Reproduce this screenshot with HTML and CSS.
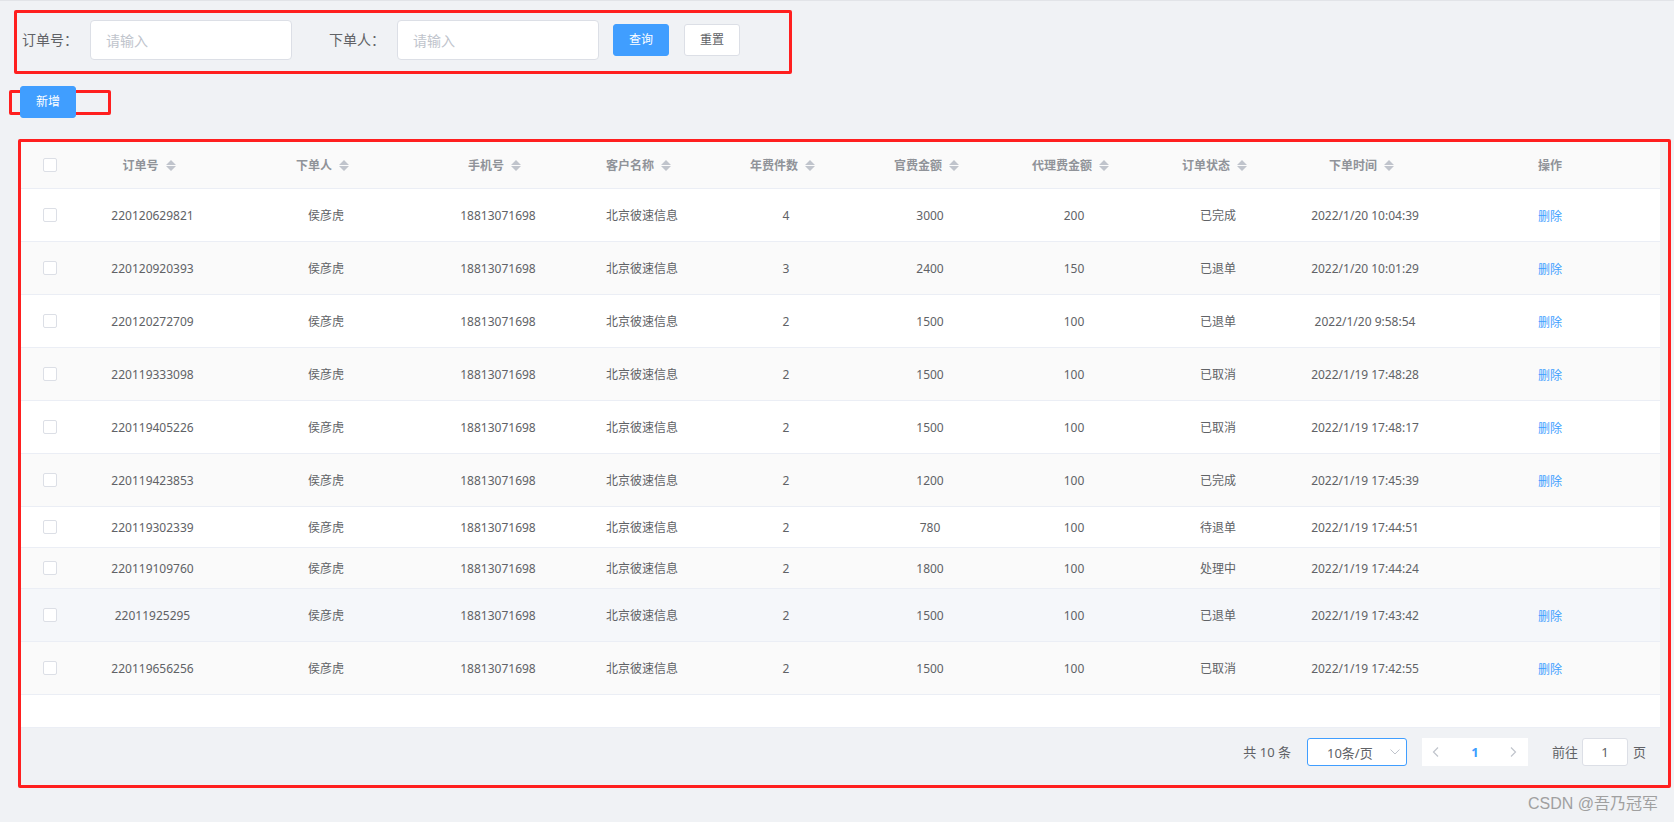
FILE: index.html
```html
<!DOCTYPE html>
<html lang="zh-CN">
<head>
<meta charset="utf-8">
<title>订单列表</title>
<link rel="stylesheet" href="styles.css">
</head>
<body>
<div class="page">
  <form class="search-form annot">
    <div class="form-item">
      <label class="form-label">订单号：</label>
      <input class="input" type="text" placeholder="请输入">
    </div>
    <div class="form-item">
      <label class="form-label">下单人：</label>
      <input class="input" type="text" placeholder="请输入">
    </div>
    <button type="button" class="btn btn-primary btn-query">查询</button>
    <button type="button" class="btn btn-reset">重置</button>
  </form>

  <div class="toolbar">
    <span class="annot mark-add"></span>
    <button type="button" class="btn btn-primary btn-add">新增</button>
  </div>

  <div class="table-box annot">
    <table class="grid">
      <colgroup>
        <col class="c-sel"><col class="c-no"><col class="c-user"><col class="c-mid"><col class="c-mid"><col class="c-mid"><col class="c-mid"><col class="c-mid"><col class="c-mid"><col class="c-time"><col class="c-op">
      </colgroup>
      <thead>
        <tr>
          <th><span class="checkbox"></span></th>
          <th>订单号<svg class="caret" viewBox="0 0 10 11" width="10" height="11"><path d="M0 5L5 0L10 5Z M0 6L10 6L5 11Z"/></svg></th>
          <th>下单人<svg class="caret" viewBox="0 0 10 11" width="10" height="11"><path d="M0 5L5 0L10 5Z M0 6L10 6L5 11Z"/></svg></th>
          <th>手机号<svg class="caret" viewBox="0 0 10 11" width="10" height="11"><path d="M0 5L5 0L10 5Z M0 6L10 6L5 11Z"/></svg></th>
          <th>客户名称<svg class="caret" viewBox="0 0 10 11" width="10" height="11"><path d="M0 5L5 0L10 5Z M0 6L10 6L5 11Z"/></svg></th>
          <th>年费件数<svg class="caret" viewBox="0 0 10 11" width="10" height="11"><path d="M0 5L5 0L10 5Z M0 6L10 6L5 11Z"/></svg></th>
          <th>官费金额<svg class="caret" viewBox="0 0 10 11" width="10" height="11"><path d="M0 5L5 0L10 5Z M0 6L10 6L5 11Z"/></svg></th>
          <th>代理费金额<svg class="caret" viewBox="0 0 10 11" width="10" height="11"><path d="M0 5L5 0L10 5Z M0 6L10 6L5 11Z"/></svg></th>
          <th>订单状态<svg class="caret" viewBox="0 0 10 11" width="10" height="11"><path d="M0 5L5 0L10 5Z M0 6L10 6L5 11Z"/></svg></th>
          <th>下单时间<svg class="caret" viewBox="0 0 10 11" width="10" height="11"><path d="M0 5L5 0L10 5Z M0 6L10 6L5 11Z"/></svg></th>
          <th>操作</th>
        </tr>
      </thead>
      <tbody>
        <tr class="tall"><td><span class="checkbox"></span></td><td>220120629821</td><td>侯彦虎</td><td>18813071698</td><td>北京彼速信息</td><td>4</td><td>3000</td><td>200</td><td>已完成</td><td>2022/1/20 10:04:39</td><td><a class="link">删除</a></td></tr>
        <tr class="tall"><td><span class="checkbox"></span></td><td>220120920393</td><td>侯彦虎</td><td>18813071698</td><td>北京彼速信息</td><td>3</td><td>2400</td><td>150</td><td>已退单</td><td>2022/1/20 10:01:29</td><td><a class="link">删除</a></td></tr>
        <tr class="tall"><td><span class="checkbox"></span></td><td>220120272709</td><td>侯彦虎</td><td>18813071698</td><td>北京彼速信息</td><td>2</td><td>1500</td><td>100</td><td>已退单</td><td>2022/1/20 9:58:54</td><td><a class="link">删除</a></td></tr>
        <tr class="tall"><td><span class="checkbox"></span></td><td>220119333098</td><td>侯彦虎</td><td>18813071698</td><td>北京彼速信息</td><td>2</td><td>1500</td><td>100</td><td>已取消</td><td>2022/1/19 17:48:28</td><td><a class="link">删除</a></td></tr>
        <tr class="tall"><td><span class="checkbox"></span></td><td>220119405226</td><td>侯彦虎</td><td>18813071698</td><td>北京彼速信息</td><td>2</td><td>1500</td><td>100</td><td>已取消</td><td>2022/1/19 17:48:17</td><td><a class="link">删除</a></td></tr>
        <tr class="tall"><td><span class="checkbox"></span></td><td>220119423853</td><td>侯彦虎</td><td>18813071698</td><td>北京彼速信息</td><td>2</td><td>1200</td><td>100</td><td>已完成</td><td>2022/1/19 17:45:39</td><td><a class="link">删除</a></td></tr>
        <tr class="short"><td><span class="checkbox"></span></td><td>220119302339</td><td>侯彦虎</td><td>18813071698</td><td>北京彼速信息</td><td>2</td><td>780</td><td>100</td><td>待退单</td><td>2022/1/19 17:44:51</td><td></td></tr>
        <tr class="short"><td><span class="checkbox"></span></td><td>220119109760</td><td>侯彦虎</td><td>18813071698</td><td>北京彼速信息</td><td>2</td><td>1800</td><td>100</td><td>处理中</td><td>2022/1/19 17:44:24</td><td></td></tr>
        <tr class="tall hover"><td><span class="checkbox"></span></td><td>22011925295</td><td>侯彦虎</td><td>18813071698</td><td>北京彼速信息</td><td>2</td><td>1500</td><td>100</td><td>已退单</td><td>2022/1/19 17:43:42</td><td><a class="link">删除</a></td></tr>
        <tr class="tall"><td><span class="checkbox"></span></td><td>220119656256</td><td>侯彦虎</td><td>18813071698</td><td>北京彼速信息</td><td>2</td><td>1500</td><td>100</td><td>已取消</td><td>2022/1/19 17:42:55</td><td><a class="link">删除</a></td></tr>
      </tbody>
    </table>
    <div class="table-empty"></div>
    <div class="pager-bar">
      <span class="total">共 10 条</span>
      <div class="sizes">
        <span>10条/页</span>
        <svg class="sizes-arrow" viewBox="0 0 10 6" width="10" height="6"><path d="M0.5 0.5L5 5L9.5 0.5"/></svg>
      </div>
      <div class="pager">
        <span class="prev"><svg viewBox="0 0 7 10" width="7" height="10"><path d="M6 0.5L1.5 5L6 9.5"/></svg></span>
        <span class="num">1</span>
        <span class="next"><svg viewBox="0 0 7 10" width="7" height="10"><path d="M1 0.5L5.5 5L1 9.5"/></svg></span>
      </div>
      <span class="jump">前往</span>
      <input class="jump-input" type="text" value="1">
      <span class="jump-unit">页</span>
    </div>
  </div>

  <div class="watermark">CSDN @吾乃冠军</div>
</div>
</body>
</html>
```

FILE: styles.css
```css
* {
  box-sizing: border-box;
}

html,
body {
  margin: 0;
  padding: 0;
}

body {
  width: 1674px;
  height: 822px;
  overflow: hidden;
  background: #f0f2f5;
  font-family: "Noto Sans", "Noto Sans CJK SC", sans-serif;
  color: #606266;
}

.page {
  border-top: 1px solid #e2e4e8;
  padding-top: 9px;
}

.annot {
  border: 3px solid #ff1f1f;
  border-radius: 2px;
}

/* search form */
.search-form {
  margin: 0 0 0 14px;
  width: 778px;
  height: 64px;
  display: flex;
  align-items: center;
  padding: 0 0 4px 5px;
}

.form-item {
  display: flex;
  align-items: center;
}

.form-item + .form-item {
  margin-left: 37px;
}

.form-label {
  width: 68px;
  padding-right: 12px;
  font-size: 14px;
  line-height: 40px;
  color: #606266;
  white-space: nowrap;
}

.input {
  width: 202px;
  height: 40px;
  border: 1px solid #dcdfe6;
  border-radius: 4px;
  padding: 0 15px;
  font-size: 14px;
  font-family: inherit;
  color: #606266;
  background: #fff;
  outline: none;
}

.input::placeholder {
  color: #c0c4cc;
}

.btn {
  width: 56px;
  height: 32px;
  padding: 0;
  border: 1px solid #dcdfe6;
  border-radius: 3px;
  background: #fff;
  color: #606266;
  font-family: inherit;
  font-size: 12px;
  line-height: 30px;
  cursor: pointer;
}

.btn-primary {
  background: #409eff;
  border-color: #409eff;
  color: #fff;
}

.btn-query {
  margin-left: 14px;
}

.btn-reset {
  margin-left: 15px;
}

/* toolbar */
.toolbar {
  position: relative;
  margin: 12px 0 0 20px;
  width: 56px;
  height: 32px;
}

.btn-add {
  position: relative;
  z-index: 1;
  display: block;
}

.mark-add {
  position: absolute;
  left: -11px;
  top: 4px;
  width: 102px;
  height: 25px;
}

/* table */
.table-box {
  margin: 21px 0 0 18px;
  width: 1653px;
  height: 649px;
  background: #f0f2f5;
}

.grid {
  width: 1639px;
  table-layout: fixed;
  border-collapse: separate;
  border-spacing: 0;
  font-size: 12px;
}

.c-sel { width: 58px; }
.c-no { width: 147px; }
.c-user { width: 200px; }
.c-mid { width: 144px; }
.c-time { width: 150px; }
.c-op { width: 220px; }

.grid th,
.grid td {
  padding: 0;
  text-align: center;
  vertical-align: middle;
  border-bottom: 1px solid #ebeef5;
  white-space: nowrap;
}

.grid th {
  height: 47px;
  background: #fafafa;
  color: #909399;
  font-weight: bold;
  line-height: 23px;
}

.grid td {
  color: #606266;
  line-height: 23px;
  background: #fff;
}

.grid tbody tr:nth-child(even) td {
  background: #fafafa;
}

.grid tbody tr.hover td {
  background: #f5f7fa;
}

.grid tr.tall td {
  height: 53px;
}

.grid tr.short td {
  height: 41px;
}

.caret {
  display: inline-block;
  vertical-align: middle;
  margin: -2px 7px 0 7px;
  fill: #c0c4cc;
}

.checkbox {
  display: inline-block;
  width: 14px;
  height: 14px;
  border: 1px solid #dcdfe6;
  border-radius: 2px;
  background: #fff;
  vertical-align: middle;
  margin-top: -2px;
}

.link {
  color: #409eff;
  cursor: pointer;
  position: relative;
  top: 1px;
}

.table-empty {
  width: 1639px;
  height: 33px;
  background: #fff;
  border-bottom: 1px solid #ebeef5;
}

/* pagination */
.pager-bar {
  width: 1639px;
  height: 56px;
  display: flex;
  justify-content: flex-end;
  align-items: flex-start;
  padding: 10px 14px 0 0;
  font-size: 13px;
  color: #606266;
}

.total {
  line-height: 28px;
  margin-right: 16px;
}

.sizes {
  width: 100px;
  height: 28px;
  border: 1px solid #409eff;
  border-radius: 3px;
  background: #fff;
  display: flex;
  align-items: center;
  padding-left: 19px;
}

.sizes-arrow {
  margin-left: auto;
  margin-right: 6px;
  fill: none;
  stroke: #c0c4cc;
  stroke-width: 1;
}

.pager {
  margin-left: 15px;
  width: 106px;
  height: 28px;
  background: #fff;
  display: flex;
  align-items: center;
}

.prev,
.next {
  width: 35px;
  height: 28px;
  display: flex;
  align-items: center;
}

.prev {
  padding-left: 10px;
}

.next {
  padding-left: 17px;
}

.prev svg,
.next svg {
  fill: none;
  stroke: #c0c4cc;
  stroke-width: 1.2;
}

.num {
  width: 36px;
  text-align: center;
  line-height: 28px;
  color: #409eff;
  font-weight: bold;
}

.jump {
  margin-left: 24px;
  line-height: 28px;
}

.jump-input {
  width: 46px;
  height: 28px;
  margin: 0 5px 0 4px;
  border: 1px solid #dcdfe6;
  border-radius: 3px;
  background: #fff;
  text-align: center;
  font-family: inherit;
  font-size: 13px;
  color: #606266;
  outline: none;
  padding: 0;
}

.jump-unit {
  line-height: 28px;
}

/* watermark */
.watermark {
  margin-top: 6px;
  padding-right: 16px;
  text-align: right;
  font-family: "Liberation Sans", "Noto Sans CJK SC", sans-serif;
  font-size: 16px;
  line-height: 20px;
  color: #a0a0a0;
}
```
